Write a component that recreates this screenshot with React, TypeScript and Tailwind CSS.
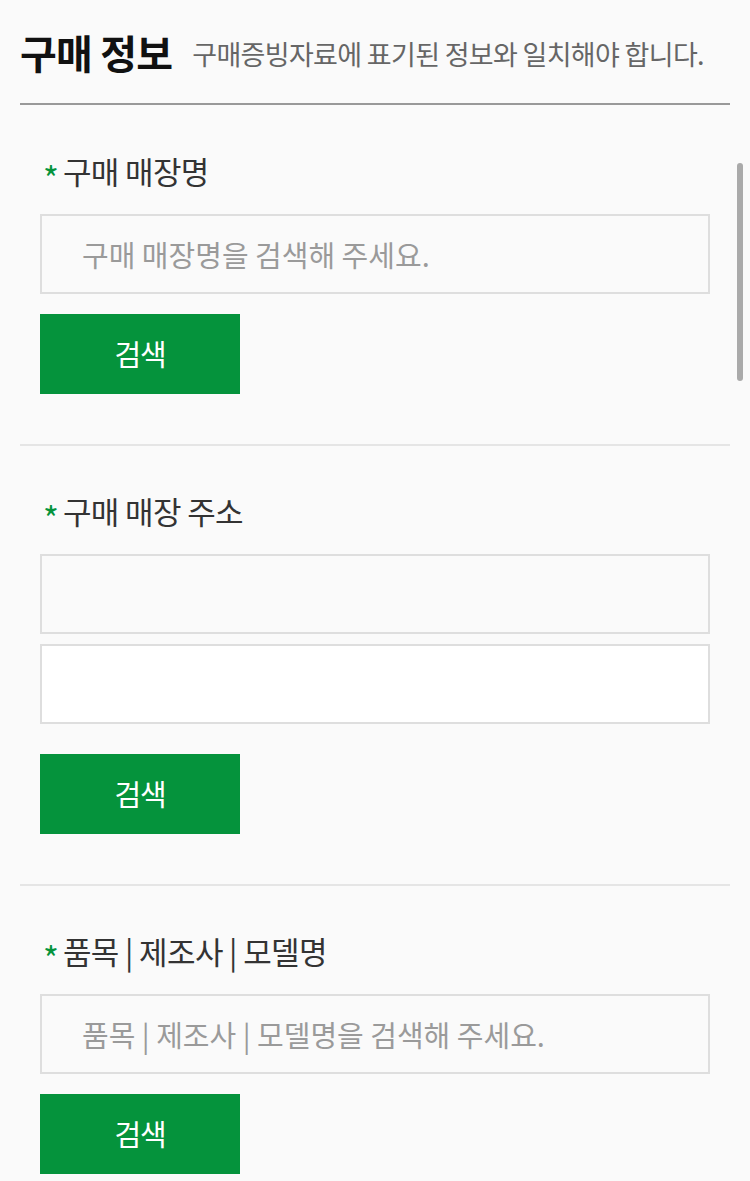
const FONT = "font-['Noto_Sans_CJK_KR','Noto_Sans',sans-serif]";

function Label({ text }: { text: string }) {
  return (
    <div className="flex h-[40px] items-center">
      <span className="ml-[3px] mr-[4px] inline-block translate-y-[8px] text-[34px] leading-none text-[#05933c]">*</span>
      <span className="text-[31px] leading-none tracking-[-0.02em] text-[#333]">{text}</span>
    </div>
  );
}

function Field({ placeholder, white }: { placeholder?: string; white?: boolean }) {
  return (
    <input
      type="text"
      placeholder={placeholder}
      className={`block h-[80px] w-full border-2 border-[#dedede] pl-[40px] text-[29px] text-[#333] outline-none placeholder:text-[#9a9a9a] ${
        white ? 'bg-white' : 'bg-transparent'
      }`}
    />
  );
}

function SearchButton({ className }: { className?: string }) {
  return (
    <button
      type="button"
      className={`flex h-[80px] w-[200px] items-center justify-center bg-[#05933c] text-[29px] tracking-[-0.04em] text-white ${className ?? ''}`}
    >
      검색
    </button>
  );
}

export default function App() {
  return (
    <div className={`relative min-h-[1181px] bg-[#fafafa] px-5 ${FONT}`}>
      <div className="flex h-[105px] items-center border-b-2 border-[#999]">
        <h1 className="text-[40px] font-bold leading-none tracking-[-0.02em] text-[#111]">구매 정보</h1>
        <p className="ml-[20px] mt-[4px] text-[27px] leading-none tracking-[-0.025em] text-[#666]">
          구매증빙자료에 표기된 정보와 일치해야 합니다.
        </p>
      </div>

      <section className="border-b-2 border-[#e5e5e5] px-5 pb-[50px] pt-[45px]">
        <Label text="구매 매장명" />
        <div className="mt-[24px]">
          <Field placeholder="구매 매장명을 검색해 주세요." />
        </div>
        <SearchButton className="mt-[20px]" />
      </section>

      <section className="border-b-2 border-[#e5e5e5] px-5 pb-[50px] pt-[44px]">
        <Label text="구매 매장 주소" />
        <div className="mt-[24px] flex flex-col gap-[10px]">
          <Field />
          <Field white />
        </div>
        <SearchButton className="mt-[30px]" />
      </section>

      <section className="px-5 pt-[44px]">
        <Label text="품목 | 제조사 | 모델명" />
        <div className="mt-[24px]">
          <Field placeholder="품목 | 제조사 | 모델명을 검색해 주세요." />
        </div>
        <SearchButton className="mt-[20px]" />
      </section>

      <div className="absolute right-[7px] top-[163px] h-[218px] w-[6px] rounded-full bg-[#aaa]" />
    </div>
  );
}
